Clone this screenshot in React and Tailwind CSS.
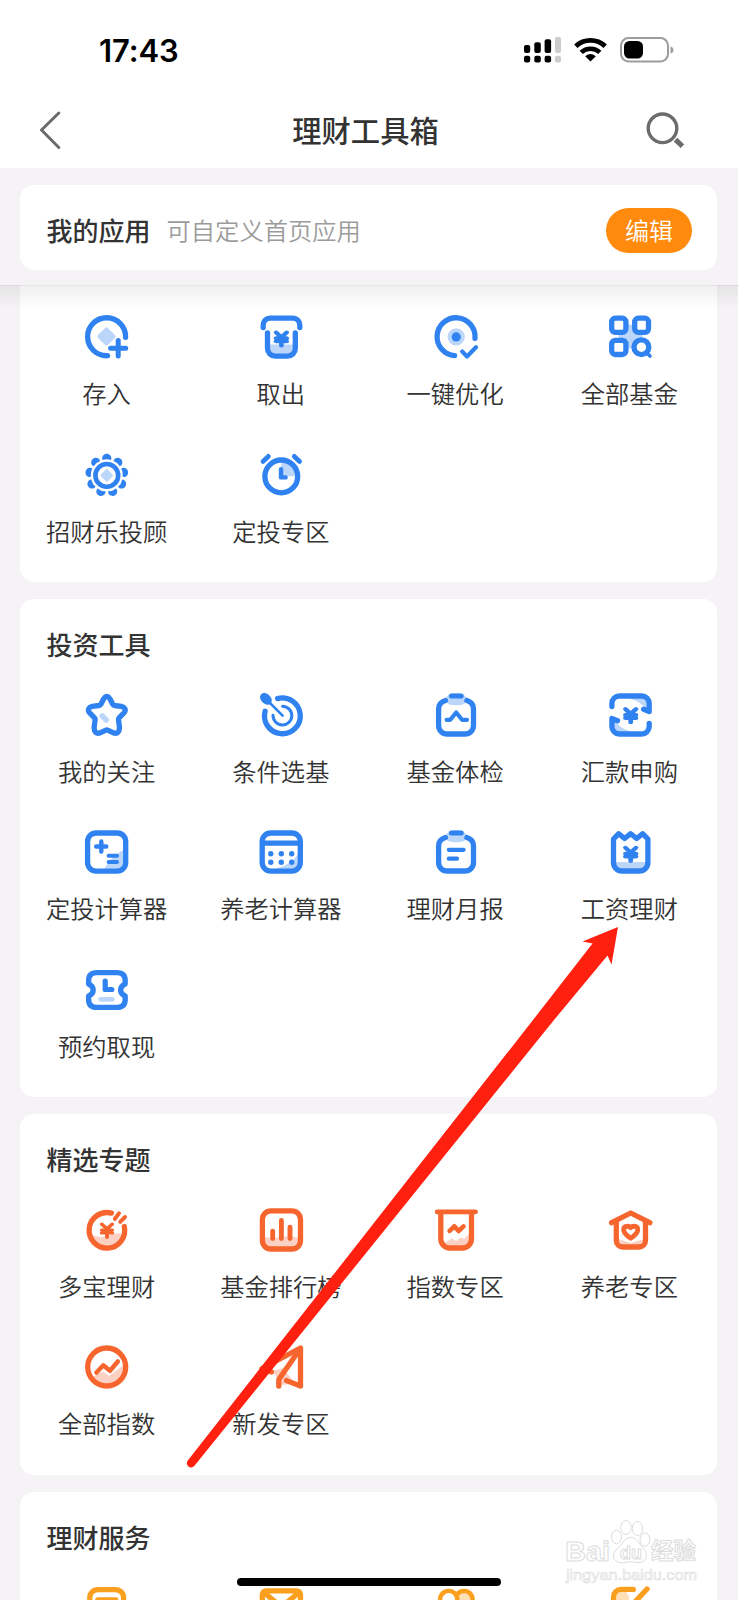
import { JapaneseYen } from 'lucide-react'

const BLUE = '#2f82f0'
const BLUE_SOFT = '#bcd6fa'
const CORAL = '#f7652f'
const CORAL_SOFT = '#fcd0c2'
const AMBER = '#fb9f1e'
const AMBER_SOFT = '#fedfb6'

// Shared 48px icon canvas
function Icon({ color = BLUE, width = 5.3, children }) {
  return (
    <svg
      className="block h-12 w-12 overflow-visible"
      viewBox="0 0 48 48"
      fill="none"
      stroke={color}
      strokeWidth={width}
      strokeLinecap="round"
      strokeLinejoin="round"
    >
      {children}
    </svg>
  )
}

function Yen({ cx, cy, color = BLUE, strokeWidth = 5.4 }) {
  return (
    <JapaneseYen
      x={cx - 10.5}
      y={cy - 9}
      width={21}
      height={17.5}
      preserveAspectRatio="none"
      color={color}
      strokeWidth={strokeWidth}
      overflow="visible"
    />
  )
}

const DepositIcon = () => (
  <Icon>
    <rect x="16.5" y="16.5" width="14" height="14" rx="2" transform="rotate(45 23.5 23.5)" fill={BLUE_SOFT} stroke="none" />
    <path d="M42.6 24.4A19 19 0 1 0 24.6 42.7" />
    <path d="M27.6 35.3H42.7M35.2 27.6V43" strokeWidth="5" />
  </Icon>
)

const WithdrawIcon = () => (
  <Icon>
    <path d="M13 31.5H36.5V40Q36.5 42 34 42H15Q13 42 13 40Z" fill={BLUE_SOFT} stroke="none" />
    <path d="M6.2 14.6V12A6.8 6.8 0 0 1 13 5.2H36A6.8 6.8 0 0 1 42.8 12V14.6" />
    <path d="M10.5 20V35.5A7.6 7.6 0 0 0 18.1 43.1H30.7A7.6 7.6 0 0 0 38.3 35.5V20" />
    <Yen cx={24.4} cy={26.3} />
  </Icon>
)

const OptimizeIcon = () => (
  <Icon>
    <circle cx="24.2" cy="23.9" r="8.6" fill={BLUE_SOFT} stroke="none" />
    <circle cx="24.2" cy="23.9" r="4.6" fill={BLUE} stroke="none" />
    <path d="M43 25.4A19 19 0 1 0 22.6 42.7" />
    <path d="M30.2 38.6L35 43.4L44 34.3" strokeWidth="4.2" />
  </Icon>
)

const AllFundsIcon = () => (
  <Icon>
    <circle cx="24.4" cy="23.6" r="12" fill={BLUE_SOFT} stroke="none" />
    <rect x="5.7" y="5.2" width="14.2" height="14.2" rx="3.6" fill="#fff" />
    <rect x="28.7" y="5.2" width="13.8" height="14.2" rx="3.6" fill="#fff" />
    <rect x="5.7" y="27.3" width="14.2" height="14.2" rx="3.6" fill="#fff" />
    <circle cx="35.4" cy="34.2" r="7.4" fill="#fff" />
    <path d="M41 40.2L44 43" strokeWidth="3.6" />
  </Icon>
)

const PETALS = [0, 40, 80, 120, 160, 200, 240, 280, 320]

const AdvisorIcon = () => (
  <Icon width={4.6}>
    {PETALS.map((deg) => (
      <path
        key={deg}
        d="M19.6 9C18 5.2 21.4 2.8 23.8 2.8C26.2 2.8 29.6 5.2 28 9Q23.8 7.4 19.6 9Z"
        transform={`rotate(${deg} 23.8 24.4)`}
        fill={BLUE}
        stroke="none"
      />
    ))}
    <circle cx="23.8" cy="24.4" r="11.4" />
    <rect x="19" y="19.6" width="9.6" height="9.6" rx="1" transform="rotate(45 23.8 24.4)" fill={BLUE_SOFT} stroke="none" />
  </Icon>
)

const AlarmIcon = () => (
  <Icon>
    <path d="M24.3 25.3V11A14.5 14.5 0 0 1 38.6 25.3Z" fill={BLUE_SOFT} stroke="none" />
    <circle cx="24.3" cy="25.4" r="16.4" />
    <path d="M6 10.4L11.3 5.4M37.3 5.4L42.6 10.4" strokeWidth="4.8" />
    <path d="M24 18.2V26.4H28.6" strokeWidth="4.4" />
  </Icon>
)

const StarIcon = () => (
  <Icon>
    <path d="M19.2 24.9L23.2 29" stroke={BLUE_SOFT} strokeWidth="5.4" />
    <path d="M20.7 7.7Q23.8 3.3 26.9 7.7L29.7 13.2Q30.3 14.3 31.5 14.5L38.3 15.4Q44.3 17 41.2 21.6L36.3 26.6Q35.3 27.7 35.5 29L36.5 36.4Q36.3 43.6 30.6 41.9L25.2 39.3Q23.8 38.6 22.4 39.3L17 41.9Q11.3 43.6 11.1 36.4L12.1 29Q12.3 27.7 11.3 26.6L6.4 21.6Q3.3 17 9.3 15.4L16.1 14.5Q17.3 14.3 17.9 13.2Z" />
  </Icon>
)

const TargetIcon = () => (
  <Icon>
    <path d="M20.6 7.6A17.9 17.9 0 1 1 8.1 20.2" />
    <path d="M25.6 15.2A9.4 9.4 0 1 1 16 24.3" strokeWidth="3" />
    <path d="M9 8L25.6 24.6" strokeWidth="2.6" />
    <ellipse cx="8.9" cy="7.9" rx="6.7" ry="4.9" transform="rotate(45 8.9 7.9)" fill={BLUE} stroke="none" />
  </Icon>
)

const Clipboard = ({ children }) => (
  <Icon>
    <path d="M13.5 9Q14.5 2 24.2 2Q34 2 35 9Q35 14.3 24.2 14.3Q13.5 14.3 13.5 9Z" fill={BLUE_SOFT} stroke="none" />
    <path d="M13.4 9.5Q6.6 11.5 6.6 18V34.5A8.5 8.5 0 0 0 15.1 43H33A8.5 8.5 0 0 0 41.5 34.5V18Q41.5 11.5 34.9 9.5" />
    <path d="M19.4 5.1H29.2" strokeWidth="5" />
    {children}
  </Icon>
)

const CheckupIcon = () => (
  <Clipboard>
    <path d="M14.6 28.8H18.3L24.2 21.5L30 28.8H35" strokeWidth="4.2" />
  </Clipboard>
)

const ReportIcon = () => (
  <Clipboard>
    <path d="M16.8 21.8H31.6M16.8 30.7H25" strokeWidth="4.2" />
  </Clipboard>
)

const RemitIcon = () => (
  <Icon>
    <path d="M23 7.5H41V19Q36 11 23 7.5ZM8 28.5Q12 37 26.5 41H8Z" fill={BLUE_SOFT} stroke="none" />
    <path d="M5.9 15.5V12.5A7.5 7.5 0 0 1 13.4 5H35.7A7.5 7.5 0 0 1 43.2 12.5V20.5L37.6 18.3" />
    <path d="M43.2 32.5V35.5A7.5 7.5 0 0 1 35.7 43H13.4A7.5 7.5 0 0 1 5.9 35.5V27.5L11.5 29.8" />
    <Yen cx={24.7} cy={25} />
  </Icon>
)

const CalculatorIcon = () => (
  <Icon>
    <path d="M43 21Q40 22 35 25L26 33L20 43H36L43 37Z" fill={BLUE_SOFT} stroke="none" />
    <rect x="4.6" y="5" width="38.1" height="38.1" rx="8.5" />
    <path d="M13.2 18.5H23.3M18.3 13.5V23.5" strokeWidth="4.4" />
    <path d="M25.6 27.8H34M25.6 33.9H34" strokeWidth="4" />
  </Icon>
)

const PensionCalcIcon = () => (
  <Icon>
    <path d="M42 23Q38 36 16 41.5H36L42 38Z" fill={BLUE_SOFT} stroke="none" />
    <rect x="5.2" y="5" width="38.1" height="38.1" rx="8.5" />
    <path d="M6 15.2H43" />
    <g fill={BLUE} stroke="none">
      <circle cx="13.8" cy="25.7" r="2.7" />
      <circle cx="24.3" cy="25.7" r="2.7" />
      <circle cx="34.7" cy="25.7" r="2.7" />
      <circle cx="13.8" cy="34.2" r="2.7" />
      <circle cx="24.3" cy="34.2" r="2.7" />
      <circle cx="34.7" cy="34.2" r="2.7" />
    </g>
  </Icon>
)

const SalaryIcon = () => (
  <Icon>
    <path d="M9 34H40V40Q38 42 35 42H14Q9 42 9 38Z" fill={BLUE_SOFT} stroke="none" />
    <path d="M7.5 11L12.7 5.7L18.6 10.5L24.7 5.7L30.7 10.5L36.6 5.7L41.9 11V34.5A8.5 8.5 0 0 1 33.4 43H16A8.5 8.5 0 0 1 7.5 34.5Z" />
    <Yen cx={24.7} cy={26.6} />
  </Icon>
)

const BookingIcon = () => (
  <Icon>
    <path d="M14 6.6H33.6Q42.2 6.6 42.2 14.5V18Q37.6 20 37.6 24Q37.6 28 42.2 30V33.5Q42.2 41.4 33.6 41.4H14Q5.6 41.4 5.6 33.5V30Q10.2 28 10.2 24Q10.2 20 5.6 18V14.5Q5.6 6.6 14 6.6Z" />
    <path d="M22.2 15V23.5H28.8" strokeWidth="5.2" />
    <path d="M17.7 33.3H29.3" stroke={BLUE_SOFT} strokeWidth="4.8" />
  </Icon>
)

const DuobaoIcon = () => (
  <Icon color={CORAL}>
    <path d="M8 28Q16 33 24 30Q32 26 41 28Q38 40 24 41Q11 40 8 28Z" fill={CORAL_SOFT} stroke="none" />
    <path d="M28.4 7.1A17.8 17.8 0 1 0 41.3 20.5" />
    <path d="M31.9 12.8L36 7.4M37.2 15.8L42 11" strokeWidth="4" />
    <Yen cx={24} cy={25} color={CORAL} strokeWidth={4.4} />
  </Icon>
)

const RankingIcon = () => (
  <Icon color={CORAL}>
    <path d="M8 31Q16 33 24 31Q34 29 41 32V38L36 41H12L8 38Z" fill={CORAL_SOFT} stroke="none" />
    <rect x="5.4" y="4.9" width="38.1" height="38.1" rx="8.5" />
    <path d="M15.7 25.3V32.5M24.4 14.5V32.5M33 21.2V32.5" strokeWidth="4.9" />
  </Icon>
)

const IndexZoneIcon = () => (
  <Icon color={CORAL}>
    <path d="M11 38L20 32.5L24 35L29 31.5L32 33L38 27V36L33 40.5H15Z" fill={CORAL_SOFT} stroke="none" />
    <path d="M5.2 5.9H43.5" strokeWidth="4.8" />
    <path d="M8.8 8V33A9 9 0 0 0 17.8 42H30.5A9 9 0 0 0 39.5 33V8" />
    <path d="M17.6 24.8L22.3 20.3L26.6 25L31.5 20.4" strokeWidth="4.6" />
  </Icon>
)

const PensionZoneIcon = () => (
  <Icon color={CORAL}>
    <path d="M12 33L24.5 37L38 33V39H12Z" fill={CORAL_SOFT} stroke="none" />
    <path d="M5.6 16.7L24.7 7L43.8 16.7" />
    <path d="M10.3 16.5V34.5A6.5 6.5 0 0 0 16.8 41H33A6.5 6.5 0 0 0 39.5 34.5V16.5" />
    <path
      d="M24.7 32.3C22 30.5 17.6 27.5 17.6 23.8C17.6 20.2 22.3 19.1 24.7 21.6C27.1 19.1 31.8 20.2 31.8 23.8C31.8 27.5 27.4 30.5 24.7 32.3Z"
      strokeWidth="4.8"
      fill="#fff"
    />
  </Icon>
)

const AllIndexIcon = () => (
  <Icon color={CORAL}>
    <path d="M9 34L20 28.5L26 33L40 22.5Q41 38 24 41.5Q14 41 9 34Z" fill={CORAL_SOFT} stroke="none" />
    <circle cx="23.7" cy="24" r="19" />
    <path d="M13.5 29.5L20.3 22.3L27 27.8L34.8 18.5" strokeWidth="4.5" />
  </Icon>
)

const NewFundIcon = () => (
  <Icon color={CORAL}>
    <path d="M16 28L26 25L36 38V41L24 42Z" fill={CORAL_SOFT} stroke="none" />
    <path d="M14.5 29L5 25.5L43.5 5V43L29.5 37.6" />
    <path d="M21.8 43V36.5L43.3 5.5" />
  </Icon>
)

const DocIcon = () => (
  <Icon color={AMBER}>
    <rect x="6.8" y="5.6" width="33.8" height="38" rx="8" />
    <path d="M14.5 15.5H33" strokeWidth="4.6" />
  </Icon>
)

const MailIcon = () => (
  <Icon color={AMBER}>
    <rect x="5.3" y="6.8" width="38.2" height="34" rx="4" />
    <path d="M7 8.5L24.4 23L42 8.5" />
  </Icon>
)

const GroupIcon = () => (
  <Icon color={AMBER} width={4.4}>
    <circle cx="32" cy="15.5" r="8.6" fill={AMBER_SOFT} />
    <circle cx="16.7" cy="15.5" r="8.6" fill="#fff" />
  </Icon>
)

const EditIcon = () => (
  <Icon color={AMBER}>
    <circle cx="14.5" cy="14.5" r="8.5" fill={AMBER_SOFT} stroke="none" />
    <path d="M27.3 5.4H15A7.5 7.5 0 0 0 7.5 13V36" />
    <path d="M41 5L22 25.5" />
  </Icon>
)

const quickItems = [
  { label: '存入', icon: DepositIcon },
  { label: '取出', icon: WithdrawIcon },
  { label: '一键优化', icon: OptimizeIcon },
  { label: '全部基金', icon: AllFundsIcon },
  { label: '招财乐投顾', icon: AdvisorIcon },
  { label: '定投专区', icon: AlarmIcon },
]

const sections = [
  {
    title: '投资工具',
    items: [
      { label: '我的关注', icon: StarIcon },
      { label: '条件选基', icon: TargetIcon },
      { label: '基金体检', icon: CheckupIcon },
      { label: '汇款申购', icon: RemitIcon },
      { label: '定投计算器', icon: CalculatorIcon },
      { label: '养老计算器', icon: PensionCalcIcon },
      { label: '理财月报', icon: ReportIcon },
      { label: '工资理财', icon: SalaryIcon },
      { label: '预约取现', icon: BookingIcon },
    ],
  },
  {
    title: '精选专题',
    items: [
      { label: '多宝理财', icon: DuobaoIcon },
      { label: '基金排行榜', icon: RankingIcon },
      { label: '指数专区', icon: IndexZoneIcon },
      { label: '养老专区', icon: PensionZoneIcon },
      { label: '全部指数', icon: AllIndexIcon },
      { label: '新发专区', icon: NewFundIcon },
    ],
  },
  {
    title: '理财服务',
    items: [
      { icon: DocIcon },
      { icon: MailIcon },
      { icon: GroupIcon },
      { icon: EditIcon },
    ],
  },
]

function ItemGrid({ items }) {
  return (
    <div className="grid grid-cols-4 gap-y-[39.3px] pb-[33.4px]">
      {items.map(({ label, icon: ItemIcon }, index) => (
        <div key={index} className="flex flex-col items-center">
          <ItemIcon />
          <span className="mt-[15px] mb-px h-[34px] pr-px text-[24.3px] leading-[34px] font-[350] whitespace-nowrap">{label}</span>
        </div>
      ))}
    </div>
  )
}

function StatusBar() {
  return (
    <div className="flex h-[100px] items-center justify-between pr-[64px] pl-[99px]">
      <span className="font-[Inter] text-[31px] leading-none font-semibold tracking-[-0.1px] text-black">17:43</span>
      <div className="flex items-center gap-[13px]">
        <svg className="h-[26px] w-[37px]" viewBox="0 0 37 26">
          <rect x="0" y="8" width="6.2" height="8" rx="2" />
          <rect x="10.3" y="5.3" width="6.5" height="10.7" rx="2" />
          <rect x="20.6" y="2.3" width="6.5" height="13.7" rx="2" />
          <rect x="31" y="0" width="6" height="16" rx="2" fill="#ccc" />
          <rect x="0" y="18.8" width="6.2" height="6.8" rx="2" />
          <rect x="10.3" y="18.8" width="6.5" height="6.8" rx="2" />
          <rect x="20.6" y="18.8" width="6.5" height="6.8" rx="2" />
          <rect x="31" y="18.8" width="6" height="6.8" rx="2" fill="#ccc" />
        </svg>
        <svg className="h-[26px] w-[33px]" viewBox="0 0 33 26" fill="none" stroke="#000">
          <path d="M1.8 9.2A21.5 21.5 0 0 1 31.2 9.2" strokeWidth="4.8" />
          <path d="M7.2 15.4A13.5 13.5 0 0 1 25.8 15.4" strokeWidth="4.6" />
          <path d="M11.2 19.2Q16.5 14.8 21.8 19.2L16.5 24.6Z" fill="#000" stroke="none" />
        </svg>
        <svg className="h-[26px] w-[54px]" viewBox="0 0 54 26">
          <rect x="1" y="1" width="47" height="23.5" rx="7.5" fill="none" stroke="#9c9c9c" strokeWidth="2" />
          <rect x="4" y="4" width="19" height="17.6" rx="5.5" />
          <path d="M50.5 9.2Q53.5 10.4 53.5 13Q53.5 15.6 50.5 16.6Z" fill="#9c9c9c" />
        </svg>
      </div>
    </div>
  )
}

function NavBar() {
  return (
    <div className="flex h-[62px] items-center justify-between pr-[54px] pl-[38px]">
      <svg className="h-10 w-6" viewBox="0 0 24 40" fill="none" stroke="#6b6b6b" strokeWidth="3" strokeLinecap="round" strokeLinejoin="round">
        <path d="M20.8 2L3.5 19L20.8 36.5" />
      </svg>
      <h1 className="pb-[3px] pl-[23px] text-[29.3px] leading-none font-medium">理财工具箱</h1>
      <svg className="h-10 w-[38px]" viewBox="0 0 38 40" fill="none" stroke="#6b6b6b">
        <circle cx="16.5" cy="17.3" r="14.3" strokeWidth="3.4" />
        <path d="M29.5 28.6L36.4 35.2" strokeWidth="5" />
      </svg>
    </div>
  )
}

function Watermark() {
  return (
    <svg
      className="absolute top-[1516px] left-[560px] h-[72px] w-[146px]"
      viewBox="0 0 146 72"
      fill="#fff"
      stroke="#dcdcdc"
      strokeWidth="1"
    >
      <text x="5" y="44.5" fontFamily="Liberation Sans" fontWeight="bold" fontSize="28" textLength="45" lengthAdjust="spacingAndGlyphs">Bai</text>
      <ellipse cx="56.5" cy="21" rx="5" ry="6.7" />
      <ellipse cx="66" cy="11.5" rx="5.2" ry="7" />
      <ellipse cx="77.5" cy="12.5" rx="5.2" ry="7" />
      <ellipse cx="85" cy="23.5" rx="5" ry="6.5" />
      <path d="M71 21.5C77 21.5 79 28 84 33C89 39 86 47 78 46.5Q71 45 64 46.5C54 48 50 39 57 33C63 28 64 21.5 71 21.5Z" />
      <text x="60" y="42.5" fontFamily="Liberation Sans" fontWeight="bold" fontSize="19" textLength="22" lengthAdjust="spacingAndGlyphs">du</text>
      <text x="91" y="42.5" fontFamily="Noto Sans CJK SC" fontWeight="bold" fontSize="22.5">经验</text>
      <text x="6" y="63.5" fontFamily="Liberation Sans" fontSize="15" textLength="131" lengthAdjust="spacingAndGlyphs" strokeWidth="0.6">jingyan.baidu.com</text>
    </svg>
  )
}

export default function App() {
  return (
    <div
      lang="zh-CN"
      className="relative flex h-[1600px] w-[738px] flex-col overflow-hidden bg-[#f5f3f5] font-['Noto_Sans_CJK_SC',sans-serif] text-[#333]"
    >
      {/* Header */}
      <header className="h-[167.5px] shrink-0 bg-white">
        <StatusBar />
        <NavBar />
      </header>

      {/* My apps */}
      <div className="h-[117.5px] shrink-0 pt-[17.5px] pr-[21px] pl-5">
        <div className="flex h-[85px] items-center rounded-[14px] bg-white pt-1.5 pr-[25px] pl-[26.5px]">
          <h2 className="pb-0.5 text-[26px] font-medium">我的应用</h2>
          <span className="ml-4 pb-px text-[24.3px] font-[350] text-[#9b9b9b]">可自定义首页应用</span>
          <button className="ml-auto h-[45px] w-[86px] rounded-full bg-[#ff8a0c] pb-0.5 text-2xl leading-none font-[350] text-white">编辑</button>
        </div>
      </div>

      {/* Scrolled content */}
      <main className="relative flex flex-1 flex-col gap-[17px] overflow-hidden pr-[21px] pl-5">
        <div className="absolute inset-x-0 top-0 h-6 border-t border-black/10 bg-linear-to-b from-black/6 to-transparent"></div>
        <section className="shrink-0 rounded-b-[14px] bg-white pt-[28.3px]">
          <ItemGrid items={quickItems} />
        </section>
        {sections.map((section) => (
          <section key={section.title} className="shrink-0 rounded-[14px] bg-white">
            <h2 className="flex h-[92px] items-center pb-0.5 pl-[26.5px] text-[26px] font-medium">{section.title}</h2>
            <ItemGrid items={section.items} />
          </section>
        ))}
      </main>

      {/* Pointer to the salary entry */}
      <svg className="absolute inset-0 h-full w-full" viewBox="0 0 738 1600" fill="#ff2010">
        <path d="M618 927L582.5 941.5L592.5 943.5L533 1020L187.8 1460.5A4.2 4.2 0 0 0 194.5 1465.8L554 1020L607.5 955.5L611.5 964.5Z" />
      </svg>

      <Watermark />

      {/* Home indicator */}
      <div className="absolute bottom-[14px] left-[237px] h-[8px] w-[264px] rounded-full bg-black"></div>
    </div>
  )
}
